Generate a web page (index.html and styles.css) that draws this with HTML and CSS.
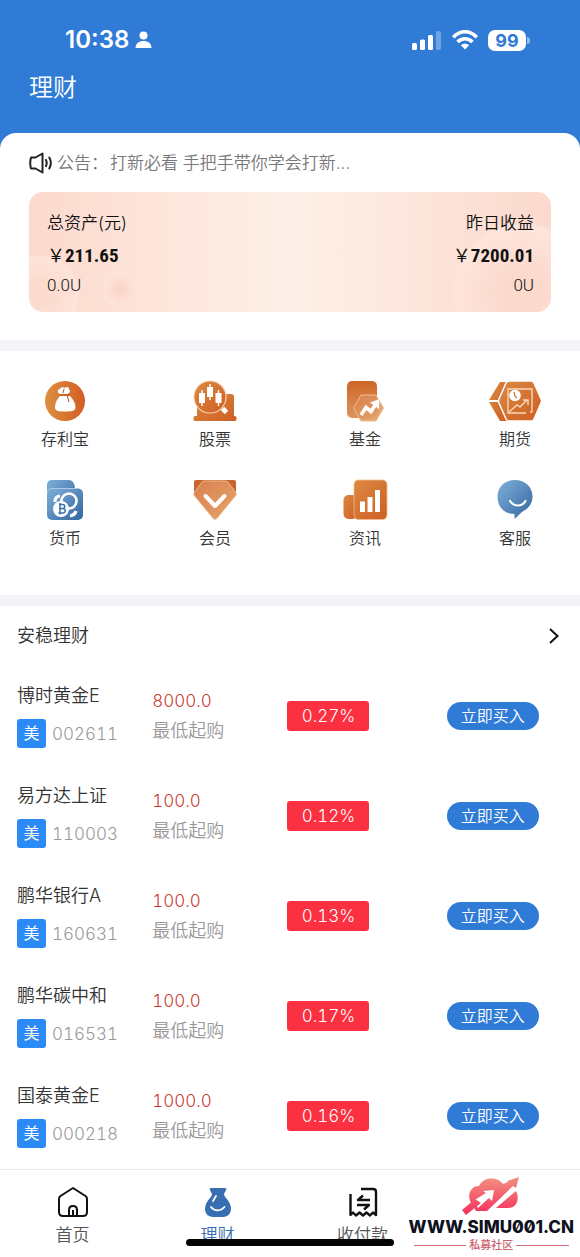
FILE: index.html
```html
<!DOCTYPE html>
<html lang="zh-CN">
<head>
<meta charset="utf-8">
<meta name="viewport" content="width=device-width, initial-scale=1">
<title>理财</title>
<link rel="stylesheet" href="styles.css">
</head>
<body>
<div class="app">
  <header class="top">
    <div class="status">
      <div class="status-left">
        <span class="clock">10:38</span>
        <svg width="17" height="18" viewBox="0 0 17 18" fill="#fff" aria-hidden="true"><circle cx="8.500" cy="4.500" r="4"/><path d="M.5 17c0-4.500 3.500-7 8-7s8 2.500 8 7z"/></svg>
      </div>
      <div class="status-right">
        <svg width="30" height="19" viewBox="0 0 30 19" fill="#fff" aria-hidden="true"><rect x="0" y="12" width="5" height="7" rx="1.500"/><rect x="8" y="8.500" width="5" height="10.500" rx="1.500"/><rect x="16" y="4" width="5" height="15" rx="1.500"/><rect x="24" y="0" width="5" height="19" rx="1.500" opacity=".3"/></svg>
        <svg width="26" height="20" viewBox="0 0 26 20" aria-hidden="true"><g fill="none" stroke="#fff" stroke-width="3.600"><path d="M1.300 7.300C8-.2 18-.2 24.700 7.300"/><path d="M5.600 11.900c4.200-4.300 10.600-4.300 14.800 0"/></g><path d="M13 19.500l-4.100-4.200c2.300-2 5.900-2 8.200 0z" fill="#fff"/></svg>
        <span class="battery">99</span>
      </div>
    </div>
    <h1 class="title">理财</h1>
  </header>

  <main class="sheet">
    <section class="overview">
      <div class="notice">
        <svg width="24" height="22" viewBox="0 0 24 22" fill="none" stroke="#222" stroke-width="2" stroke-linecap="round" stroke-linejoin="round" aria-hidden="true"><path d="M2 5.500H6.500L13.500 1.500v19L6.500 16.500H2c-1-3.500-1-7.500 0-11z"/><path d="M17 8c.9 2 .9 4.200 0 6.200M20.300 5.500c2 3.600 2 7.500 0 11"/></svg>
        <p class="notice-text"><span>公告：</span><span>打新必看 手把手带你学会打新...</span></p>
      </div>
      <div class="assets">
        <div class="asset">
          <span class="asset-label">总资产(元)</span>
          <span class="asset-value"><span class="yen">￥</span>211.65</span>
          <span class="asset-sub">0.0U</span>
        </div>
        <div class="asset asset-end">
          <span class="asset-label">昨日收益</span>
          <span class="asset-value"><span class="yen">￥</span>7200.01</span>
          <span class="asset-sub">0U</span>
        </div>
      </div>
    </section>

    <nav class="services">
      <svg class="defs" aria-hidden="true">
        <defs>
          <linearGradient id="or" x1="0" y1="0" x2="1" y2="1"><stop offset="0" stop-color="#dc8a43"/><stop offset="1" stop-color="#ce5e22"/></linearGradient>
          <linearGradient id="orh" x1="0" y1="0" x2="1" y2="0"><stop offset="0" stop-color="#dc9040"/><stop offset="1" stop-color="#d35d24"/></linearGradient>
          <linearGradient id="orv" x1="0" y1="0" x2="0" y2="1"><stop offset="0" stop-color="#cf6527"/><stop offset="1" stop-color="#dd9560"/></linearGradient>
          <linearGradient id="orl" x1="0" y1="0" x2="1" y2="1"><stop offset="0" stop-color="#d98050"/><stop offset="1" stop-color="#e5a669"/></linearGradient>
          <linearGradient id="bl" x1="0" y1="0" x2="1" y2="1"><stop offset="0" stop-color="#7fb0da"/><stop offset="1" stop-color="#34659f"/></linearGradient>
        </defs>
      </svg>
      <a class="service" href="#">
        <svg class="service-icon" viewBox="0 0 52 42" aria-hidden="true"><circle cx="26" cy="21" r="20" fill="url(#orh)"/><path d="M21 14c-3-1-3-5 0-5 .5-2 3-2.500 4.500-1 2-2 5-.5 4.500 1.500 2 1 1 3.500-1.500 4.500z" fill="#fff"/><path d="M21 16h10c3 3 5.500 7 5.500 11 0 4-3.500 4.500-10.500 4.500S16 31 16 27c0-4 2-8 5-11z" fill="#fff"/><path d="M20.500 15h10M25 9l-1 4M28 15l2 7" stroke="#b9531e" stroke-width="1" fill="none"/></svg>
        <span>存利宝</span>
      </a>
      <a class="service" href="#">
        <svg class="service-icon" viewBox="0 0 52 42" aria-hidden="true"><path d="M18 14h24c2 0 3 1 3 3v19h1c2 0 2 5 0 5H6c-2 0-2-5 0-5h2V25z" fill="url(#or)"/><circle cx="21" cy="17" r="16" fill="url(#or)" stroke="#f6d3ac" stroke-width="1.200"/><path d="M13 10v16M21 4v16M29.500 10v16" stroke="#fff" stroke-width="1.400"/><path d="M10 13h6v10h-6zM18 7h6v10h-6zM26.500 13h6v10h-6z" fill="#fff"/><path d="M33.500 28.500l4 4" stroke="#fff" stroke-width="5"/></svg>
        <span>股票</span>
      </a>
      <a class="service" href="#">
        <svg class="service-icon" viewBox="0 0 52 42" aria-hidden="true"><rect x="8" y="1" width="30" height="37" rx="5" fill="url(#orv)"/><path d="M22 15h15l7.500 13-7.500 13H22l-7.500-13z" fill="url(#orl)" fill-opacity=".92" stroke="#f0bd8d" stroke-width="1" stroke-linejoin="round"/><path d="M22 35l5-7.500 5 4L37.500 23" fill="none" stroke="#fff" stroke-width="3.600"/><path d="M31 22.500l9.500-3.500-.5 10z" fill="#fff"/></svg>
        <span>基金</span>
      </a>
      <a class="service" href="#">
        <svg class="service-icon" viewBox="0 0 52 42" aria-hidden="true"><path d="M11 2h7L9 20H0zM0 22h9l9 19h-7z" fill="url(#or)"/><path d="M20 1h22q2 0 3 2l7 16q1 2 0 4l-7 16q-1 2-3 2H20q-2 0-3-2l-7-16q-1-2 0-4l7-16q1-2 3-2z" fill="url(#or)" stroke="#fff" stroke-width="1.500"/><path d="M41 32h2V9H19v24h18" fill="none" stroke="#f6d8bd" stroke-width="1.400"/><path d="M20 32l8-7 3 2 7-7M34 20h5v5" fill="none" stroke="#f6d8bd" stroke-width="1.500"/><circle cx="26" cy="15.500" r="5.800" fill="#fff"/><path d="M25 12l1 4 2 2" fill="none" stroke="#d47b36" stroke-width="1.300"/></svg>
        <span>期货</span>
      </a>
      <a class="service" href="#">
        <svg class="service-icon" viewBox="0 0 52 42" aria-hidden="true"><path d="M8 36V6q0-5 5-5h17q5 0 6 8z" fill="url(#bl)"/><rect x="8" y="9.500" width="36" height="31.500" rx="5" fill="url(#bl)"/><path d="M8 15q0-5.500 5-5.500h26" fill="none" stroke="#a9cbe6"/><circle cx="30" cy="22" r="7.500" fill="none" stroke="#fff" stroke-width="2.600"/><path d="M16 23q0-6 5-6M37 32q-1 4-6 5" fill="none" stroke="#fff" stroke-width="3.200"/><circle cx="22" cy="30" r="8" fill="#fff"/><path d="M20 25.500h3.500c3 0 3 4 0 4H20m3.500 0c4 0 3.500 4.500 0 4.500H19.500M21 24v11.500" fill="none" stroke="#3c70a9" stroke-width="1.500"/></svg>
        <span>货币</span>
      </a>
      <a class="service" href="#">
        <svg class="service-icon" viewBox="0 0 52 42" aria-hidden="true"><path d="M7 1h38q2 0 2 2v14H5V3q0-2 2-2z" fill="#c8642d"/><path d="M16 2h20q2 0 3 1l8 11q1 1-.5 3L28 39.500q-2 2-4 0L5.500 17q-1.500-2-.5-3l8-11q1-1 3-1z" fill="url(#orl)" stroke="#f5c79f" stroke-width=".8"/><path d="M16.500 17L26 27l9.500-10" fill="none" stroke="#fff" stroke-width="4" stroke-linecap="round" stroke-linejoin="round"/></svg>
        <span>会员</span>
      </a>
      <a class="service" href="#">
        <svg class="service-icon" viewBox="0 0 52 42" aria-hidden="true"><rect x="4.500" y="16" width="14" height="24" rx="5" fill="url(#or)"/><rect x="15" y="1" width="33" height="39.500" rx="4.500" fill="url(#or)" stroke="#f0bd8d" stroke-width=".8"/><path d="M21 22.500h5V33h-5zM28.500 18h5v15h-5zM36 11h5v22h-5z" fill="#fff"/></svg>
        <span>资讯</span>
      </a>
      <a class="service" href="#">
        <svg class="service-icon" viewBox="0 0 52 42" aria-hidden="true"><path d="M26 1c10 0 17.500 7 17.500 16.500 0 8-5 12.500-10 15L25.500 40v-5C15.500 35 8.500 28 8.500 18S16 1 26 1z" fill="url(#bl)"/><path d="M21 22c4 6 12 6 15.500 0" fill="none" stroke="#fff" stroke-width="2.200" stroke-linecap="round"/></svg>
        <span>客服</span>
      </a>
    </nav>

    <section class="funds">
      <a class="funds-head" href="#">
        <h2 class="funds-title">安稳理财</h2>
        <svg width="10" height="16" viewBox="0 0 10 16" fill="none" stroke="#111" stroke-width="2" aria-hidden="true"><path d="M1 1l7.500 7L1 15"/></svg>
      </a>
      <ul class="fund-list">
        <li class="fund">
          <div class="fund-id"><span class="fund-name">博时黄金E</span><span class="fund-code"><span class="tag">美</span>002611</span></div>
          <div class="fund-min"><span class="price">8000.0</span><span class="hint">最低起购</span></div>
          <span class="rate">0.27%</span>
          <button class="buy" type="button">立即买入</button>
        </li>
        <li class="fund">
          <div class="fund-id"><span class="fund-name">易方达上证</span><span class="fund-code"><span class="tag">美</span>110003</span></div>
          <div class="fund-min"><span class="price">100.0</span><span class="hint">最低起购</span></div>
          <span class="rate">0.12%</span>
          <button class="buy" type="button">立即买入</button>
        </li>
        <li class="fund">
          <div class="fund-id"><span class="fund-name">鹏华银行A</span><span class="fund-code"><span class="tag">美</span>160631</span></div>
          <div class="fund-min"><span class="price">100.0</span><span class="hint">最低起购</span></div>
          <span class="rate">0.13%</span>
          <button class="buy" type="button">立即买入</button>
        </li>
        <li class="fund">
          <div class="fund-id"><span class="fund-name">鹏华碳中和</span><span class="fund-code"><span class="tag">美</span>016531</span></div>
          <div class="fund-min"><span class="price">100.0</span><span class="hint">最低起购</span></div>
          <span class="rate">0.17%</span>
          <button class="buy" type="button">立即买入</button>
        </li>
        <li class="fund">
          <div class="fund-id"><span class="fund-name">国泰黄金E</span><span class="fund-code"><span class="tag">美</span>000218</span></div>
          <div class="fund-min"><span class="price">1000.0</span><span class="hint">最低起购</span></div>
          <span class="rate">0.16%</span>
          <button class="buy" type="button">立即买入</button>
        </li>
      </ul>
    </section>
  </main>

  <footer class="dock">
    <nav class="tabs">
      <a class="tab" href="#">
        <svg width="32" height="32" viewBox="0 0 32 32" fill="none" stroke="#111" stroke-width="2" stroke-linejoin="round" aria-hidden="true"><path d="M16 2L3.500 10Q2 11 2 13v13q0 4 4 4h20q4 0 4-4V13q0-2-1.500-3z"/><path d="M12 30v-6q0-4 4-4t4 4v6M16 24v6"/></svg>
        <span>首页</span>
      </a>
      <a class="tab tab-active" href="#" aria-current="page">
        <svg width="32" height="32" viewBox="0 0 32 32" aria-hidden="true"><path d="M9 2h14q2 0 1 2l-2 4q0 2 2 4c3 3 5 7 5 11 0 5-4 8-8 8H11c-4 0-8-3-8-8 0-4 2-8 5-11q2-2 2-4L8 4q-1-2 1-2z" fill="#386fb2"/><path d="M9 21c4 5 10 4 13.500 0M14 10l-3 5" fill="none" stroke="#fff" stroke-width="1.800" stroke-linecap="round"/></svg>
        <span>理财</span>
      </a>
      <a class="tab" href="#">
        <svg width="32" height="32" viewBox="0 0 32 32" fill="none" stroke="#111" stroke-width="2.400" stroke-linejoin="round" aria-hidden="true"><path d="M14 3h12q3 0 3 3v23l-3-2.500-3 3-3.500-3-3.500 3-3.500-3-3.500 3-3-3L3.500 29V8"/><path d="M23 14H11l5-4.500M10 19h12l-5 4.500"/></svg>
        <span>收付款</span>
      </a>
    </nav>
    <div class="home-bar"></div>
    <div class="brand">
      <svg width="58" height="38" viewBox="0 0 58 38" aria-hidden="true">
        <defs><linearGradient id="br" gradientUnits="userSpaceOnUse" x1="0" y1="0" x2="0" y2="36"><stop offset="0" stop-color="#f29180"/><stop offset="1" stop-color="#f43560"/></linearGradient></defs>
        <path d="M8 24C5 15 11 8 17 9 21 0 35-1 41 7l5-2-1-1L57 0l-3 11-3-2-26 25H14z" fill="url(#br)"/>
        <path d="M54 14c4 8 1 17-8 17H34z" fill="url(#br)"/>
        <path d="M11 24l13-8-3-2 11-1-2 11-3-3L16 31z" fill="#fff"/>
        <path d="M0 33l13-11 6 4L4 38z" fill="url(#br)"/>
      </svg>
      <span class="brand-url">WWW.SIMU001.CN</span>
      <span class="brand-name">私募社区</span>
    </div>
  </footer>
</div>
</body>
</html>
```
FILE: styles.css
```css
* {
  box-sizing: border-box;
}

body {
  margin: 0;
  background: #fff;
  color: #333;
  font-family: Inter, "Noto Sans CJK SC", sans-serif;
  font-size: 17px;
  font-weight: 350;
  line-height: 24px;
}

a {
  color: inherit;
  text-decoration: none;
}

h1,
h2,
p,
ul {
  margin: 0;
  padding: 0;
  font-weight: 350;
}

svg {
  display: block;
  flex: none;
}

.app {
  display: flex;
  flex-direction: column;
  min-height: 100vh;
  background: #307bd6;
}

.top {
  padding: 24px 29px 27px;
  color: #fff;
}

.status {
  display: flex;
  align-items: center;
  justify-content: space-between;
  height: 32px;
  padding: 0 25px 0 36px;
}

.status-left,
.status-right {
  display: flex;
  align-items: center;
}

.status-left {
  gap: 6px;
}

.status-right {
  gap: 10px;
}

.clock {
  font-size: 24px;
  font-weight: 600;
}

.battery {
  position: relative;
  width: 38px;
  height: 21px;
  border-radius: 7px;
  background: #fff;
  color: #307bd6;
  font-size: 18px;
  font-weight: 700;
  line-height: 21px;
  text-align: center;
}

.battery::after {
  content: "";
  position: absolute;
  top: 7px;
  right: -4px;
  width: 3px;
  height: 7px;
  border-radius: 0 3px 3px 0;
  background: #8fbdf0;
}

.title {
  margin-top: 14px;
  font-size: 24px;
  line-height: 36px;
}

.sheet {
  flex: 1;
  border-radius: 16px 16px 0 0;
  background: #fff;
}

.overview {
  padding: 18px 29px 28px;
}

.notice {
  display: flex;
  align-items: center;
  gap: 4px;
  margin-bottom: 17px;
  color: #77777c;
}

.notice-text {
  display: flex;
  gap: 2px;
}

.assets {
  display: flex;
  justify-content: space-between;
  padding: 17px 17px 15px 18px;
  border-radius: 14px;
  background:
    radial-gradient(circle at 91px 97px, #fcd5c9 3px, #fde0d5 12px, #fde4da 15px, transparent 19px),
    radial-gradient(circle at 12px 102px, #fddcd0 14px, #fee4da 37px, transparent 39px),
    radial-gradient(circle at 494px 102px, #fcd9cd 20px, #fee5dc 68px, transparent 72px),
    linear-gradient(90deg, #fdd9cd, #fde3d8 20%, #fdefe7 50%, #fdeae1 64%, #fcd9cd);
  color: #111;
}

.asset {
  display: flex;
  flex-direction: column;
}

.asset-end {
  align-items: flex-end;
}

.asset-label {
  line-height: 28px;
}

.asset-value {
  font-family: "Roboto Condensed", Roboto, "Noto Sans CJK SC", sans-serif;
  font-size: 19px;
  font-weight: 700;
  line-height: 34px;
}

.yen {
  font-family: "Noto Sans CJK SC", sans-serif;
  font-size: 18px;
  font-weight: 400;
}

.asset-sub {
  font-family: Roboto, sans-serif;
}

.services {
  display: grid;
  grid-template-columns: repeat(4, 72px);
  justify-content: space-between;
  row-gap: 28px;
  padding: 29px 29px 45px;
  border-top: 11px solid #f3f4f7;
  border-bottom: 11px solid #f3f4f7;
  font-size: 16px;
}

.defs {
  position: absolute;
  width: 0;
  height: 0;
}

.service {
  display: flex;
  flex-direction: column;
  align-items: center;
  gap: 5px;
}

.service-icon {
  width: 52px;
  height: 42px;
}

.funds-head {
  display: flex;
  align-items: center;
  justify-content: space-between;
  height: 60px;
  padding: 0 21px 0 17px;
}

.funds-title {
  font-size: 18px;
}

.fund-list {
  list-style: none;
  font-variant-numeric: tabular-nums;
}

.fund {
  display: grid;
  grid-template-columns: 27fr 27fr 27fr 28fr;
  align-items: center;
  height: 100px;
  padding: 0 17px;
}

.fund-id {
  display: flex;
  flex-direction: column;
  gap: 11px;
}

.fund-name,
.hint {
  font-size: 18px;
}

.fund-code {
  display: flex;
  align-items: center;
  gap: 6px;
  color: #999;
}

.tag {
  width: 29px;
  height: 29px;
  border-radius: 3px;
  background: #2b8af5;
  color: #fff;
  font-size: 16px;
  font-weight: 400;
  line-height: 29px;
  text-align: center;
}

.fund-min {
  display: flex;
  flex-direction: column;
  gap: 6px;
}

.price {
  color: #cb3a31;
}

.hint {
  color: #999;
}

.rate {
  justify-self: start;
  width: 82px;
  border-radius: 3px;
  background: #fb3041;
  color: #fff;
  line-height: 30px;
  text-align: center;
}

.buy {
  justify-self: center;
  height: 28px;
  padding: 0 14px;
  border: 0;
  border-radius: 14px;
  background: #307bd6;
  color: #fff;
  font: inherit;
  font-size: 16px;
}

.dock {
  position: relative;
  height: 88px;
  border-top: 1px solid #e9e9eb;
  background: #fff;
}

.tabs {
  display: grid;
  grid-template-columns: repeat(4, 1fr);
}

.tab {
  display: flex;
  flex-direction: column;
  align-items: center;
  gap: 5px;
  padding-top: 16px;
  color: #555;
}

.tab-active {
  color: #386fb2;
}

.home-bar {
  position: absolute;
  bottom: 11px;
  left: 50%;
  width: 208px;
  height: 7px;
  margin-left: -104px;
  border-radius: 4px;
  background: #050505;
}

.brand {
  position: absolute;
  top: 7px;
  right: 6px;
  display: flex;
  flex-direction: column;
  align-items: center;
  color: #0f1020;
}

.brand-url {
  font-size: 17px;
  font-weight: 800;
  font-feature-settings: "zero";
  line-height: 24px;
}

.brand-name {
  display: flex;
  align-items: center;
  align-self: stretch;
  gap: 3px;
  padding: 0 5px;
  color: #cc6272;
  font-size: 11px;
  font-weight: 500;
  line-height: 12px;
}

.brand-name::before,
.brand-name::after {
  content: "";
  flex: 1;
  height: 1px;
  background: #d8707c;
}
```
